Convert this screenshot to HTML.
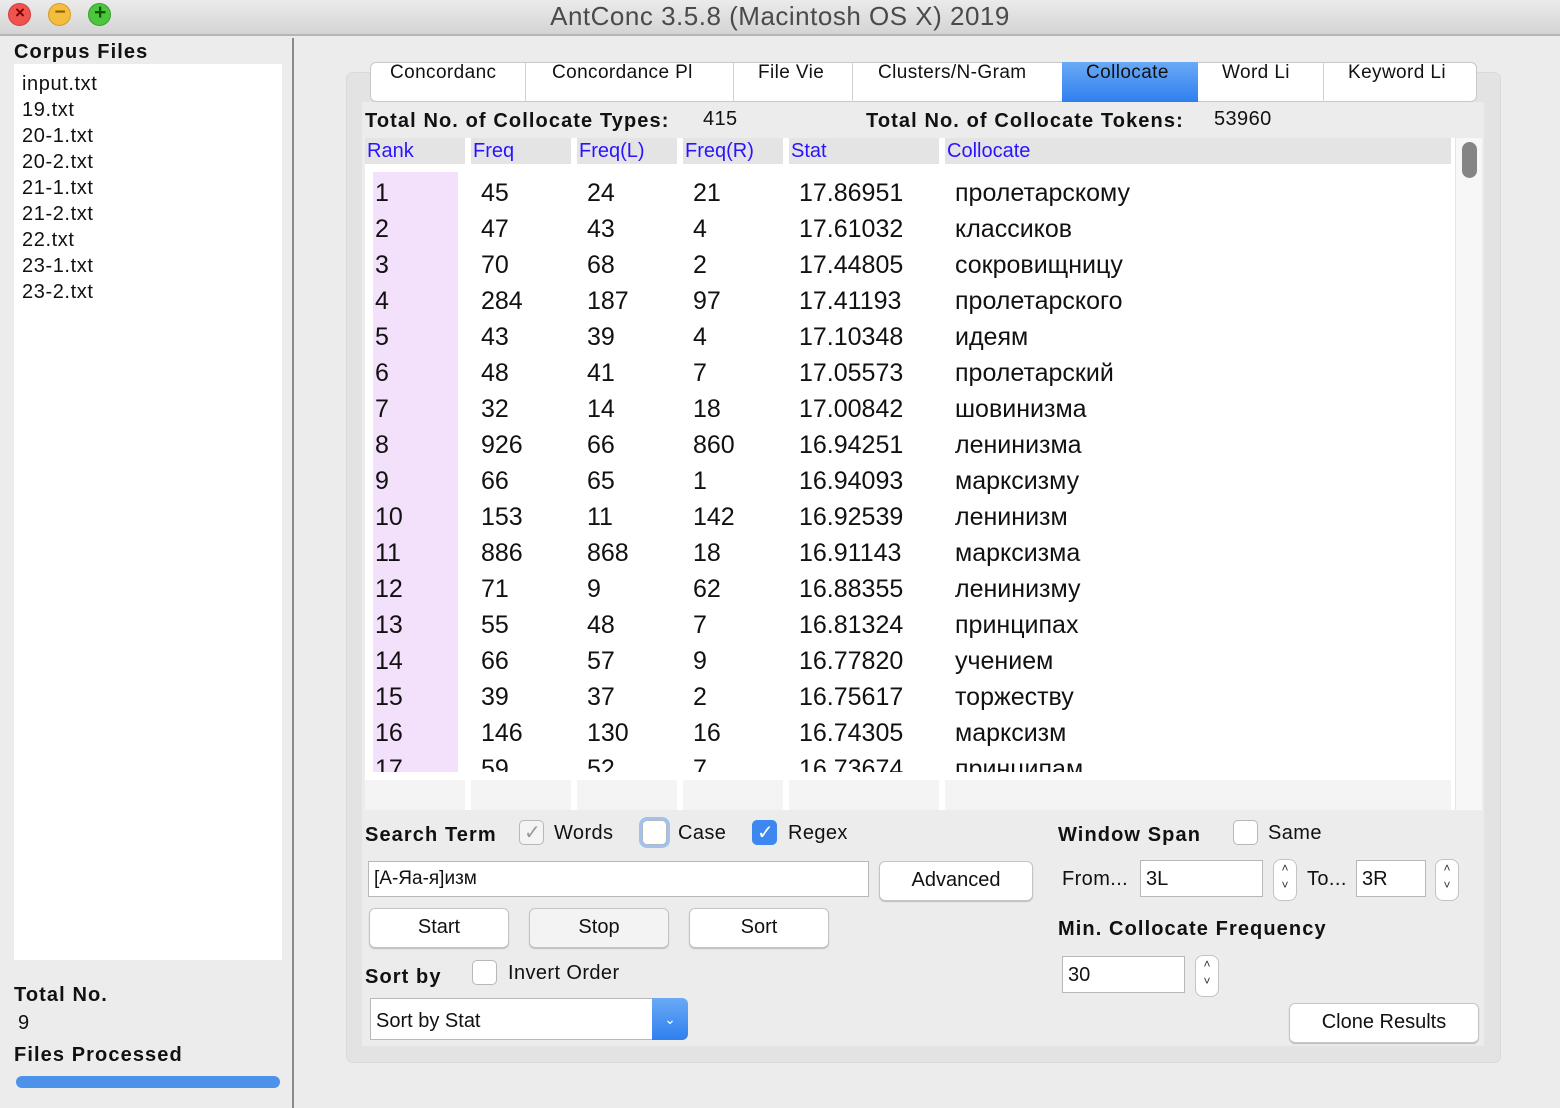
<!DOCTYPE html>
<html><head><meta charset="utf-8"><style>
*{margin:0;padding:0;box-sizing:border-box}
body{width:1560px;height:1108px;background:#ececec;font-family:"Liberation Sans","DejaVu Sans",sans-serif;position:relative;overflow:hidden;color:#111}
.a{position:absolute;white-space:nowrap}
.title{left:0;top:0;width:1560px;height:36px;background:linear-gradient(#ebebeb,#d4d4d4);border-bottom:2px solid #b5b5b5}
.dot{position:absolute;top:3px;width:23px;height:23px;border-radius:50%}
.b{font-weight:bold;letter-spacing:1.1px !important}
.files div{height:26px;font-size:20px;letter-spacing:.6px}
.hd{position:absolute;top:138px;height:26px;background:#e4e4e4;color:#2a14ff;font-size:20px;padding-left:2px;line-height:26px}
.row{position:absolute;left:375px;font-size:25px;height:36px;line-height:36px}
.row span{position:absolute;top:0}
.btn{position:absolute;background:#fff;border:1px solid #c4c4c4;border-radius:6px;box-shadow:0 1px 1px rgba(0,0,0,.2);text-align:center;font-size:20px}
.inp{position:absolute;background:#fff;border:1px solid #b8b8b8;font-size:20px;padding-left:5px}
.cb{position:absolute;width:25px;height:25px;border:1px solid #b8b8b8;border-radius:5px;background:#fff}
.spin{position:absolute;width:24px;height:42px;border:1px solid #c4c4c4;border-radius:8px;background:#fff;font-size:12px;text-align:center;line-height:17px;color:#333}
.lbl{font-size:20px;letter-spacing:.4px}
.tab{font-size:19px;letter-spacing:.4px;overflow:hidden}
</style></head><body>
<div class="a title"></div>
<div class="dot" style="left:8px;background:#f0524f;border:1px solid #d0403d"></div>
<div class="dot" style="left:48px;background:#f5bd3c;border:1px solid #d49c2a"></div>
<div class="dot" style="left:88px;background:#4ec53f;border:1px solid #35a02c"></div>
<div class="a" style="left:14px;top:4px;width:12px;text-align:center;font-size:17px;line-height:17px;color:#700;font-weight:bold">×</div>
<div class="a" style="left:54px;top:4px;width:12px;text-align:center;font-size:19px;line-height:17px;color:#8a5a00;font-weight:bold">−</div>
<div class="a" style="left:94px;top:4px;width:12px;text-align:center;font-size:21px;line-height:17px;color:#0b5a00;font-weight:bold">+</div>
<div class="a" style="left:0;width:1560px;top:1px;text-align:center;font-size:26px;color:#4a4a4a;letter-spacing:.5px">AntConc 3.5.8 (Macintosh OS X) 2019</div>

<!-- left -->
<div class="a" style="left:292px;top:38px;width:2px;height:1070px;background:#8a8a8a"></div>
<div class="a b lbl" style="left:14px;top:41px">Corpus Files</div>
<div class="a" style="left:14px;top:64px;width:268px;height:896px;background:#fff"></div>
<div class="a files" style="left:22px;top:73px">
<div>input.txt</div><div>19.txt</div><div>20-1.txt</div><div>20-2.txt</div><div>21-1.txt</div><div>21-2.txt</div><div>22.txt</div><div>23-1.txt</div><div>23-2.txt</div></div>
<div class="a b lbl" style="left:14px;top:984px">Total No.</div>
<div class="a lbl" style="left:18px;top:1012px">9</div>
<div class="a b lbl" style="left:14px;top:1044px">Files Processed</div>
<div class="a" style="left:16px;top:1076px;width:264px;height:12px;border-radius:6px;background:#4d92ea"></div>

<!-- tab panel -->
<div class="a" style="left:346px;top:72px;width:1155px;height:991px;background:#e3e3e3;border-radius:7px;border:1px solid #dadada"></div>
<div class="a" style="left:362px;top:102px;width:1122px;height:944px;background:#ececec"></div>
<div class="a" style="left:370px;top:62px;width:1107px;height:40px;background:#fff;border:1px solid #c8c8c8;border-radius:6px"></div>
<div class="a" style="left:1062px;top:62px;width:136px;height:40px;background:linear-gradient(#6aaaf5,#2f7fef)"></div>
<div class="a" style="left:525px;top:62px;width:1px;height:40px;background:#d0d0d0"></div>
<div class="a" style="left:733px;top:62px;width:1px;height:40px;background:#d0d0d0"></div>
<div class="a" style="left:852px;top:62px;width:1px;height:40px;background:#d0d0d0"></div>
<div class="a" style="left:1323px;top:62px;width:1px;height:40px;background:#d0d0d0"></div>
<div class="a tab" style="left:390px;top:62px;width:115px">Concordanc</div>
<div class="a tab" style="left:552px;top:62px;width:160px">Concordance Pl</div>
<div class="a tab" style="left:758px;top:62px;width:72px">File Vie</div>
<div class="a tab" style="left:878px;top:62px;width:162px">Clusters/N-Gram</div>
<div class="a tab" style="left:1086px;top:62px;width:90px">Collocate</div>
<div class="a tab" style="left:1222px;top:62px;width:80px">Word Li</div>
<div class="a tab" style="left:1348px;top:62px;width:112px">Keyword Li</div>

<div class="a b lbl" style="left:365px;top:110px">Total No. of Collocate Types:</div>
<div class="a lbl" style="left:703px;top:108px">415</div>
<div class="a b lbl" style="left:866px;top:110px">Total No. of Collocate Tokens:</div>
<div class="a lbl" style="left:1214px;top:108px">53960</div>

<!-- table -->
<div class="a" style="left:365px;top:138px;width:1117px;height:672px;background:#fff"></div>
<div class="hd" style="left:365px;width:100px">Rank</div>
<div class="hd" style="left:471px;width:100px">Freq</div>
<div class="hd" style="left:577px;width:100px">Freq(L)</div>
<div class="hd" style="left:683px;width:100px">Freq(R)</div>
<div class="hd" style="left:789px;width:150px">Stat</div>
<div class="hd" style="left:945px;width:506px">Collocate</div>
<div class="a" style="left:1455px;top:138px;width:27px;height:672px;background:#f7f7f7;border-left:1px solid #e4e4e4"></div>
<div class="a" style="left:1462px;top:142px;width:15px;height:36px;border-radius:8px;background:#858585"></div>
<div class="a" style="left:373px;top:172px;width:85px;height:600px;background:#f3e0fb"></div>
<div class="a" style="left:365px;top:164px;width:1086px;height:608px;overflow:hidden">
<div style="position:relative;left:-365px;top:-164px">
<div class="row" style="top:175px"><span style="left:0">1</span><span style="left:106px">45</span><span style="left:212px">24</span><span style="left:318px">21</span><span style="left:424px">17.86951</span><span style="left:580px">пролетарскому</span></div>
<div class="row" style="top:211px"><span style="left:0">2</span><span style="left:106px">47</span><span style="left:212px">43</span><span style="left:318px">4</span><span style="left:424px">17.61032</span><span style="left:580px">классиков</span></div>
<div class="row" style="top:247px"><span style="left:0">3</span><span style="left:106px">70</span><span style="left:212px">68</span><span style="left:318px">2</span><span style="left:424px">17.44805</span><span style="left:580px">сокровищницу</span></div>
<div class="row" style="top:283px"><span style="left:0">4</span><span style="left:106px">284</span><span style="left:212px">187</span><span style="left:318px">97</span><span style="left:424px">17.41193</span><span style="left:580px">пролетарского</span></div>
<div class="row" style="top:319px"><span style="left:0">5</span><span style="left:106px">43</span><span style="left:212px">39</span><span style="left:318px">4</span><span style="left:424px">17.10348</span><span style="left:580px">идеям</span></div>
<div class="row" style="top:355px"><span style="left:0">6</span><span style="left:106px">48</span><span style="left:212px">41</span><span style="left:318px">7</span><span style="left:424px">17.05573</span><span style="left:580px">пролетарский</span></div>
<div class="row" style="top:391px"><span style="left:0">7</span><span style="left:106px">32</span><span style="left:212px">14</span><span style="left:318px">18</span><span style="left:424px">17.00842</span><span style="left:580px">шовинизма</span></div>
<div class="row" style="top:427px"><span style="left:0">8</span><span style="left:106px">926</span><span style="left:212px">66</span><span style="left:318px">860</span><span style="left:424px">16.94251</span><span style="left:580px">ленинизма</span></div>
<div class="row" style="top:463px"><span style="left:0">9</span><span style="left:106px">66</span><span style="left:212px">65</span><span style="left:318px">1</span><span style="left:424px">16.94093</span><span style="left:580px">марксизму</span></div>
<div class="row" style="top:499px"><span style="left:0">10</span><span style="left:106px">153</span><span style="left:212px">11</span><span style="left:318px">142</span><span style="left:424px">16.92539</span><span style="left:580px">ленинизм</span></div>
<div class="row" style="top:535px"><span style="left:0">11</span><span style="left:106px">886</span><span style="left:212px">868</span><span style="left:318px">18</span><span style="left:424px">16.91143</span><span style="left:580px">марксизма</span></div>
<div class="row" style="top:571px"><span style="left:0">12</span><span style="left:106px">71</span><span style="left:212px">9</span><span style="left:318px">62</span><span style="left:424px">16.88355</span><span style="left:580px">ленинизму</span></div>
<div class="row" style="top:607px"><span style="left:0">13</span><span style="left:106px">55</span><span style="left:212px">48</span><span style="left:318px">7</span><span style="left:424px">16.81324</span><span style="left:580px">принципах</span></div>
<div class="row" style="top:643px"><span style="left:0">14</span><span style="left:106px">66</span><span style="left:212px">57</span><span style="left:318px">9</span><span style="left:424px">16.77820</span><span style="left:580px">учением</span></div>
<div class="row" style="top:679px"><span style="left:0">15</span><span style="left:106px">39</span><span style="left:212px">37</span><span style="left:318px">2</span><span style="left:424px">16.75617</span><span style="left:580px">торжеству</span></div>
<div class="row" style="top:715px"><span style="left:0">16</span><span style="left:106px">146</span><span style="left:212px">130</span><span style="left:318px">16</span><span style="left:424px">16.74305</span><span style="left:580px">марксизм</span></div>
<div class="row" style="top:751px"><span style="left:0">17</span><span style="left:106px">59</span><span style="left:212px">52</span><span style="left:318px">7</span><span style="left:424px">16.73674</span><span style="left:580px">принципам</span></div>
</div></div>
<div class="a" style="left:365px;top:780px;width:100px;height:30px;background:#f4f4f4"></div>
<div class="a" style="left:471px;top:780px;width:100px;height:30px;background:#f4f4f4"></div>
<div class="a" style="left:577px;top:780px;width:100px;height:30px;background:#f4f4f4"></div>
<div class="a" style="left:683px;top:780px;width:100px;height:30px;background:#f4f4f4"></div>
<div class="a" style="left:789px;top:780px;width:150px;height:30px;background:#f4f4f4"></div>
<div class="a" style="left:945px;top:780px;width:506px;height:30px;background:#f4f4f4"></div>

<!-- controls -->
<div class="a b lbl" style="left:365px;top:824px">Search Term</div>
<div class="cb" style="left:519px;top:820px;background:#f4f4f4"></div><div class="a" style="left:524px;top:820px;font-size:20px;color:#999">✓</div>
<div class="a lbl" style="left:554px;top:822px">Words</div>
<div class="cb" style="left:642px;top:820px;box-shadow:0 0 0 3px #9ec2f2"></div>
<div class="a lbl" style="left:678px;top:822px">Case</div>
<div class="cb" style="left:752px;top:820px;background:#3d88f0;border-color:#3d88f0"></div><div class="a" style="left:757px;top:820px;font-size:20px;color:#fff">✓</div>
<div class="a lbl" style="left:788px;top:822px">Regex</div>
<div class="inp" style="left:368px;top:861px;width:501px;height:36px;line-height:34px;font-size:19px">[А-Яа-я]изм</div>
<div class="btn" style="left:879px;top:861px;width:154px;height:40px;line-height:36px">Advanced</div>
<div class="btn" style="left:369px;top:908px;width:140px;height:40px;line-height:36px">Start</div>
<div class="btn" style="left:529px;top:908px;width:140px;height:40px;line-height:36px;background:#f3f3f3">Stop</div>
<div class="btn" style="left:689px;top:908px;width:140px;height:40px;line-height:36px">Sort</div>
<div class="a b lbl" style="left:365px;top:966px">Sort by</div>
<div class="cb" style="left:472px;top:960px"></div>
<div class="a lbl" style="left:508px;top:962px">Invert Order</div>
<div class="inp" style="left:370px;top:998px;width:290px;height:42px;line-height:44px">Sort by Stat</div>
<div class="a" style="left:652px;top:998px;width:36px;height:42px;background:linear-gradient(#6aaaf5,#2f7fef);border-radius:0 6px 6px 0;color:#fff;text-align:center;line-height:42px;font-size:14px">&#8964;</div>

<div class="a b lbl" style="left:1058px;top:824px">Window Span</div>
<div class="cb" style="left:1233px;top:820px"></div>
<div class="a lbl" style="left:1268px;top:822px">Same</div>
<div class="a lbl" style="left:1062px;top:868px">From...</div>
<div class="inp" style="left:1140px;top:860px;width:123px;height:37px;line-height:36px">3L</div>
<div class="spin" style="left:1273px;top:859px">˄<br>˅</div>
<div class="a lbl" style="left:1307px;top:868px">To...</div>
<div class="inp" style="left:1356px;top:860px;width:70px;height:37px;line-height:36px">3R</div>
<div class="spin" style="left:1435px;top:859px">˄<br>˅</div>
<div class="a b lbl" style="left:1058px;top:918px">Min. Collocate Frequency</div>
<div class="inp" style="left:1062px;top:956px;width:123px;height:37px;line-height:36px">30</div>
<div class="spin" style="left:1195px;top:955px">˄<br>˅</div>
<div class="btn" style="left:1289px;top:1003px;width:190px;height:40px;line-height:36px">Clone Results</div>
</body></html>
